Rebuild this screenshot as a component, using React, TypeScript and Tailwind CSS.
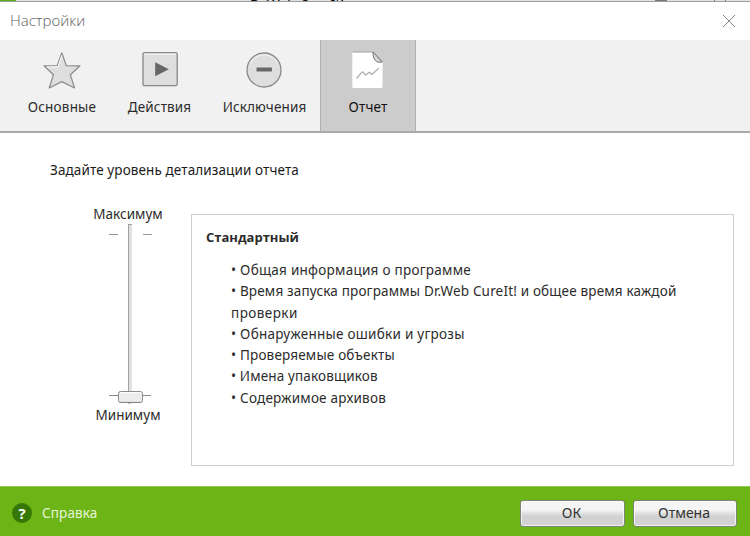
import React from "react";

type TabProps = {
  label: string;
  className: string;
  labelClass?: string;
  children: React.ReactNode;
};

function Tab({ label, className, labelClass = "tracking-[0.12px]", children }: TabProps) {
  return (
    <button className={`flex h-[91px] shrink-0 flex-col items-center pt-[10px] ${className}`}>
      {children}
      <span className={`mt-[7px] whitespace-nowrap text-[13.5px] leading-[20px] ${labelClass}`}>{label}</span>
    </button>
  );
}

function StarIcon() {
  return (
    <svg width="40" height="40" viewBox="0 0 40 40">
      <path
        d="M19.8 2.8L24.3 15.7L38 15.8L28.3 24.8L32.6 38L19.8 31.6L7.2 38L11.4 24.8L2 15.8L15.2 15.7Z"
        fill="#dedede"
        stroke="#8c8c8c"
        strokeWidth="1.2"
        strokeLinejoin="round"
      />
      <path d="M19.8 5.3L16 16.8L5 17" fill="none" stroke="#fff" />
    </svg>
  );
}

function PlayIcon() {
  return (
    <svg width="40" height="40" viewBox="0 0 40 40">
      <rect x="3" y="2.7" width="34.2" height="33" rx="1.5" fill="#dedede" stroke="#888" strokeWidth="1.3" />
      <path d="M4.2 4.2H36" stroke="#f7f7f7" />
      <path d="M15.2 12.2V26.3L28.8 19.2Z" fill="#666" />
    </svg>
  );
}

function MinusIcon() {
  return (
    <svg width="40" height="40" viewBox="0 0 40 40">
      <circle cx="19" cy="20" r="17" fill="#dedede" stroke="#8a8a8a" strokeWidth="1.3" />
      <path d="M5 13.5A15.6 15.6 0 0 1 33 13.5" fill="none" stroke="#f5f5f5" />
      <rect x="11.5" y="17.5" width="15.4" height="4" fill="#686868" />
    </svg>
  );
}

function ReportIcon() {
  return (
    <svg width="40" height="40" viewBox="0 0 40 40">
      <path d="M4.8 1.8H25L34.6 12V36.5Q34.6 38 33 38H5.8Q4.3 38 4.3 36.5V2.6Z" fill="#fff" />
      <path d="M4.5 2H25.2L34.2 11.5" fill="none" stroke="#999" />
      <path d="M25 2Q25 9.5 28.7 11.6Q30.7 12.7 34.2 12L26.7 3.8Z" fill="#d7d7d7" stroke="#777" strokeWidth="1" />
      <path
        d="M8.5 28.5L13.6 22.4Q15.2 21.2 16.3 23.8Q17.2 26 18.5 24.2L21.2 22.2L23.8 24.3L27.2 21.5L30.7 18.2"
        fill="none"
        stroke="#b0b0b0"
        strokeWidth="1.3"
      />
    </svg>
  );
}

function CloseIcon() {
  return (
    <svg width="14" height="14" viewBox="0 0 14 14">
      <path d="M1 1L13 13M13 1L1 13" stroke="#858585" strokeWidth="1" />
    </svg>
  );
}

function Slider() {
  return (
    <svg width="46" height="183" viewBox="0 0 46 183" className="block">
      <rect x="20" y="1" width="4" height="180" fill="#e2e2e2" />
      <path d="M20.5 1V181M20 1.5H24" fill="none" stroke="#a0a0a0" />
      <path d="M1 11.5H10M35 11.5H44" stroke="#999" />
      <path d="M1 172.5H43" stroke="#8a8a8a" />
      <rect x="10.5" y="168.5" width="24" height="11" rx="2" fill="#ececec" stroke="#8b8b8b" />
      <path d="M12 169.7H33" stroke="#fff" />
      <path d="M12 179.4H33" stroke="#858585" />
    </svg>
  );
}

const details: { text: string; style: string }[] = [
  { text: "• Общая информация о программе", style: "tracking-[0.26px]" },
  { text: "• Время запуска программы Dr.Web CureIt! и общее время каждой", style: "tracking-[0.17px]" },
  { text: "проверки", style: "tracking-[0.45px]" },
  { text: "• Обнаруженные ошибки и угрозы", style: "tracking-[0.26px]" },
  { text: "• Проверяемые объекты", style: "tracking-[0.18px]" },
  { text: "• Имена упаковщиков", style: "tracking-[0.14px]" },
  { text: "• Содержимое архивов", style: "tracking-[0.22px]" },
];

function DialogButton({ label, className }: { label: string; className: string }) {
  return (
    <button
      className={`flex h-[27px] items-center justify-center rounded-[3px] border border-[#7c8575] bg-linear-to-b from-[#f5f5f5] from-35% to-[#d2d2d2] to-60% pr-[2px] text-[14px] leading-[20px] text-[#333] inset-ring inset-ring-white/70 ${className}`}
    >
      {label}
    </button>
  );
}

export default function App() {
  return (
    <div className="flex h-[536px] w-[750px] flex-col overflow-hidden bg-white font-['Noto_Sans','Open_Sans',sans-serif] text-[13.5px] text-[#2c2c2c]">
      <div className="relative h-[2px] shrink-0 overflow-hidden border-b border-[#9d9d9d] bg-[#e2e2e2]">
        <div className="absolute top-0 left-0 h-[2px] w-[16px] bg-[#55b31a]" />
        <div className="absolute top-0 left-[250px] text-[14px] leading-[10px] text-black">Dr.Web CureIt!</div>
        <div className="absolute top-0 left-[655px] h-[2px] w-[12px] bg-[#777]" />
        <div className="absolute top-0 left-[714px] h-[2px] w-[12px] border-x border-[#777]" />
      </div>

      <header className="flex h-[38px] shrink-0 items-center justify-between pr-[14px] pl-[10px]">
        <h1 className="-mt-[2px] font-['Open_Sans'] text-[15px] leading-[20px] font-light text-[#606060]">Настройки</h1>
        <CloseIcon />
      </header>

      <nav className="flex h-[93px] shrink-0 border-b-2 border-[#aaa] bg-[#f1f1f1] pl-[14px]">
        <Tab label="Основные" className="w-[96px]" labelClass="tracking-[0.2px]"><StarIcon /></Tab>
        <Tab label="Действия" className="w-[99px]"><PlayIcon /></Tab>
        <Tab label="Исключения" className="w-[111px]"><MinusIcon /></Tab>
        <Tab label="Отчет" className="h-[90px] w-[96px] border-x border-x-[#b0b0b0] bg-[#cccccc]" labelClass="tracking-[0.2px] text-[#111]"><ReportIcon /></Tab>
      </nav>

      <main className="flex min-h-0 flex-1 flex-col pt-[27px]">
        <p className="pl-[50px] leading-[20px] tracking-[0.11px] whitespace-nowrap text-[#1c1c1c]">Задайте уровень детализации отчета</p>
        <div className="flex items-start pt-[24px]">
          <div className="flex w-[191px] flex-col items-center pl-[68px] leading-[20px] tracking-[0.03px]">
            <span className="-ml-[3px]">Максимум</span>
            <div className="-mt-[1px] h-[182px] w-[44px]"><Slider /></div>
            <span className="-ml-[3px]">Минимум</span>
          </div>
          <section className="mt-[10px] h-[252px] w-[543px] border border-[#cfcfcf] pt-[12px]">
            <h2 className="pl-[14px] font-['Open_Sans'] text-[13px] leading-[20px] font-bold text-[#2c2c2c]">Стандартный</h2>
            <ul className="pt-[13px] pl-[39px] leading-[21.3px]">
              {details.map((d) => (
                <li key={d.text}>
                  <span className={`whitespace-nowrap ${d.style}`}>{d.text}</span>
                </li>
              ))}
            </ul>
          </section>
        </div>
      </main>

      <footer className="flex h-[50px] shrink-0 items-center border-t border-[#91c94d] bg-[#6db416] pt-[3px] pl-[12px]">
        <span className="flex size-[20px] items-center justify-center rounded-full bg-[#367805] font-['Open_Sans'] text-[15px] leading-none font-bold text-white">?</span>
        <a className="mt-[1px] ml-[10px] tracking-[0.12px] text-[#e9f5da]">Справка</a>
        <div className="ml-auto flex gap-[8px] pr-[13px]">
          <DialogButton label="ОК" className="w-[105px]" />
          <DialogButton label="Отмена" className="w-[104px]" />
        </div>
      </footer>
    </div>
  );
}
